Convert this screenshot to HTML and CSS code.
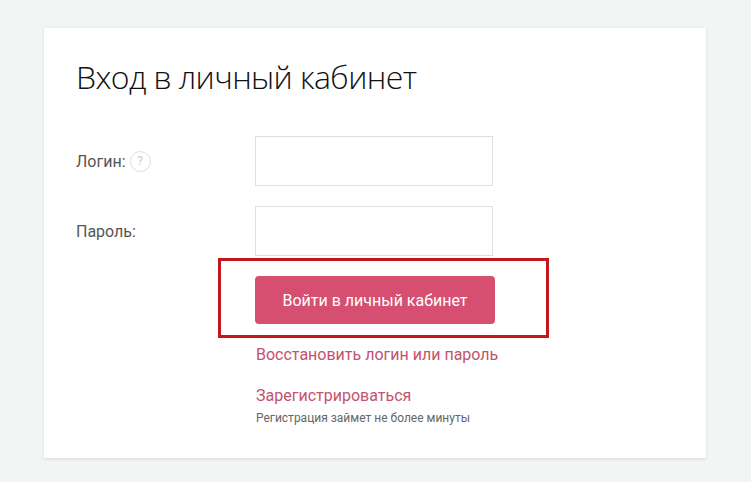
FILE: index.html
```html
<!DOCTYPE html>
<html lang="ru">
<head>
<meta charset="utf-8">
<title>Вход в личный кабинет</title>
<link rel="stylesheet" href="styles.css">
</head>
<body>
<div class="card">
  <h1 class="title">Вход в личный кабинет</h1>
  <div class="row row-login">
    <label class="label">Логин: <span class="help">?</span></label>
    <input class="field" type="text">
  </div>
  <div class="row row-pass">
    <label class="label">Пароль:</label>
    <input class="field" type="password">
  </div>
  <div class="highlight">
    <button class="btn">Войти в личный кабинет</button>
  </div>
  <div class="links">
    <a class="link restore" href="#">Восстановить логин или пароль</a>
    <a class="link register" href="#">Зарегистрироваться</a>
    <div class="note">Регистрация займет не более минуты</div>
  </div>
</div>
</body>
</html>
```
FILE: styles.css
```css
html, body {
  margin: 0;
  padding: 0;
}
body {
  background: #f1f6f5;
  font-family: Roboto, "Liberation Sans", sans-serif;
  width: 751px;
  height: 482px;
  overflow: hidden;
}
.card {
  margin: 28px 0 0 44px;
  width: 662px;
  height: 430px;
  box-sizing: border-box;
  background: #fff;
  box-shadow: 0 1px 3px rgba(0,0,0,0.12);
  padding: 30px 0 0 32px;
}
.title {
  margin: 0;
  font-family: "Open Sans", sans-serif;
  font-weight: 300;
  font-size: 32px;
  line-height: 38px;
  color: #111;
  letter-spacing: -0.6px;
}
.row {
  display: flex;
  align-items: center;
}
.row-login {
  margin-top: 40px;
}
.row-pass {
  margin-top: 20px;
}
.label {
  width: 179px;
  font-size: 16px;
  color: #555;
  display: flex;
  align-items: center;
  gap: 4px;
}
.help {
  display: inline-flex;
  align-items: center;
  justify-content: center;
  width: 19px;
  height: 19px;
  border: 1px solid #ddd;
  border-radius: 50%;
  font-size: 12px;
  color: #ccc;
}
.field {
  width: 238px;
  height: 50px;
  box-sizing: border-box;
  border: 1px solid #dedede;
  margin: 0;
  padding: 0 10px;
  background: #fff;
}
.highlight {
  margin: 2px 0 0 142px;
  width: 331px;
  height: 80px;
  box-sizing: border-box;
  border: 3px solid #c4161c;
  padding: 15px 0 0 34px;
}
.btn {
  width: 240px;
  height: 48px;
  border: 0;
  border-radius: 4px;
  background: #d64f70;
  color: #fff;
  font-family: Roboto, "Liberation Sans", sans-serif;
  font-size: 16px;
  padding: 0;
}
.links {
  margin: 7px 0 0 180px;
  display: flex;
  flex-direction: column;
  align-items: flex-start;
}
.link {
  color: #c3526e;
  text-decoration: none;
  font-size: 16px;
  line-height: 20px;
}
.register {
  margin-top: 21px;
}
.note {
  margin-top: 4px;
  font-size: 12px;
  line-height: 16px;
  color: #666;
}
```
